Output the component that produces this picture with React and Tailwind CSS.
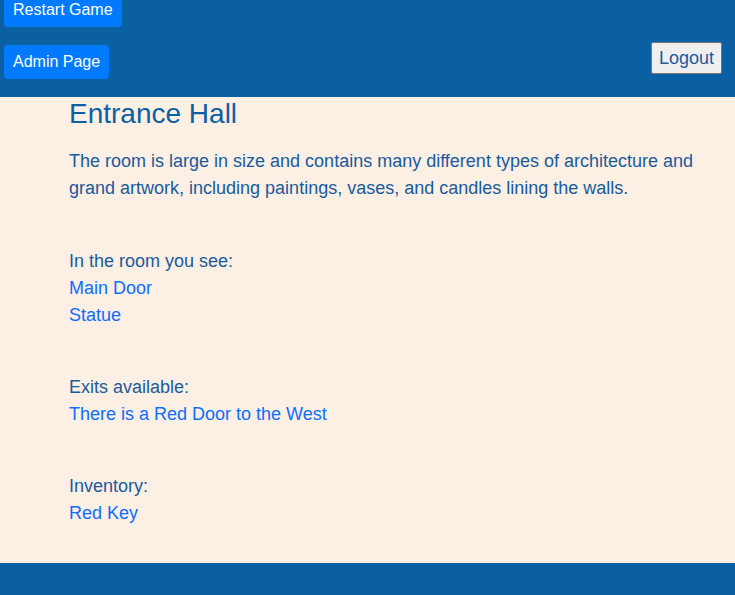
export default function App() {
  return (
    <div className="min-h-[595px] flex flex-col bg-[#fcefe4] font-['Liberation_Sans',Arial,sans-serif] overflow-hidden">
      <header className="h-[97px] bg-[#0b5fa3] flex justify-between items-start shrink-0">
        <div className="flex flex-col items-start pl-[4px] -mt-[7px]">
          <button className="h-[34px] px-[9px] rounded-[4px] bg-[#007bff] text-white text-[16px] leading-[24px]">
            Restart Game
          </button>
          <button className="mt-[18px] h-[34px] px-[9px] rounded-[4px] bg-[#007bff] text-white text-[16px] leading-[24px]">
            Admin Page
          </button>
        </div>
        <button className="mt-[42px] mr-[13px] h-[32px] px-[7px] bg-[#efefef] border border-[#767676] rounded-[2px] text-[#1d5b9c] text-[18px] leading-[22px]">
          Logout
        </button>
      </header>
      <main className="flex-1 pl-[69px] pr-[20px] text-[18px] leading-[27px] text-[#1a5b9c]">
        <h1 className="text-[28px] leading-[34px] mt-[0px] text-[#0b5fa3]">Entrance Hall</h1>
        <p className="mt-[17px]">
          The room is large in size and contains many different types of architecture and grand artwork, including paintings, vases, and candles lining the walls.
        </p>
        <div className="mt-[46px]">
          <div>In the room you see:</div>
          <div className="text-[#0d6efd]">Main Door</div>
          <div className="text-[#0d6efd]">Statue</div>
        </div>
        <div className="mt-[45px]">
          <div>Exits available:</div>
          <div className="text-[#0d6efd]">There is a Red Door to the West</div>
        </div>
        <div className="mt-[45px]">
          <div>Inventory:</div>
          <div className="text-[#0d6efd]">Red Key</div>
        </div>
      </main>
      <footer className="h-[32px] bg-[#0b5fa3] shrink-0"></footer>
    </div>
  );
}
